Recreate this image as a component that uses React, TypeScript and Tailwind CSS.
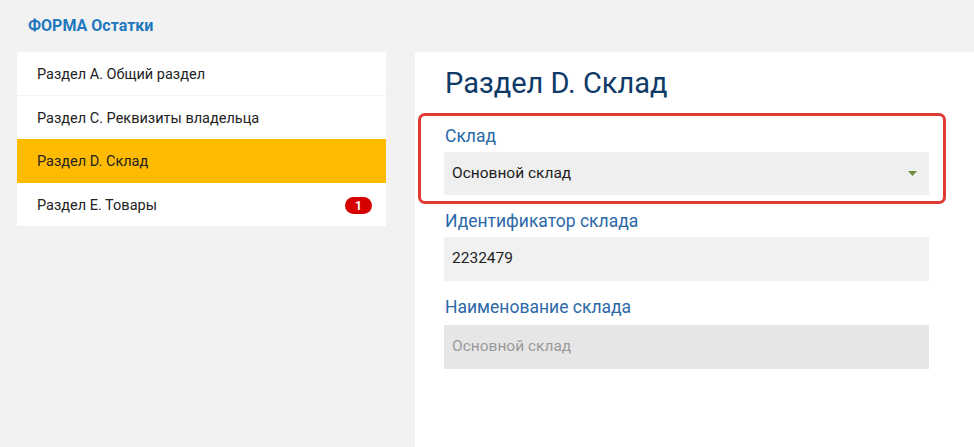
const sections = [
  { name: "Раздел А. Общий раздел" },
  { name: "Раздел С. Реквизиты владельца" },
  { name: "Раздел D. Склад", active: true },
  { name: "Раздел Е. Товары", badge: 1 },
]

export default function App() {
  return (
    <div className="w-[974px] h-[447px] bg-[#f2f2f2] flex flex-col overflow-hidden font-['Roboto',sans-serif]">
      <div className="h-[52px] flex items-center pl-[28px]">
        <span className="text-[16px] font-bold text-[#1f78bd]">ФОРМА Остатки</span>
      </div>

      <div className="flex flex-1 min-h-0">
        <aside className="ml-[17px] w-[369px] self-start bg-white">
          {sections.map((s, i) => (
            <div
              key={s.name}
              className={`h-[43.5px] flex items-center justify-between pl-[20px] pr-[14px] pt-[3px] ${
                s.active ? "bg-[#ffbb00]" : ""
              } ${i === 0 ? "border-b border-[#f3f3f3]" : ""}`}
            >
              <span className="text-[14.5px] text-[#222]">{s.name}</span>
              {s.badge ? (
                <span className="h-[17px] min-w-[27px] px-[8px] rounded-full bg-[#d60000] text-white text-[12px] font-bold flex items-center justify-center leading-none">
                  {s.badge}
                </span>
              ) : null}
            </div>
          ))}
        </aside>

        <main className="ml-[29px] flex-1 bg-white pt-[13px] pl-[3px] pr-[28px]">
          <h1 className="pl-[27px] text-[29px] leading-[36px] text-[#0d3a66]">Раздел D. Склад</h1>

          <div className="mt-[12px] border-[3px] border-[#e03a33] rounded-[7px] pl-[23px] pr-[14px] pt-[10px] pb-[6px]">
            <label className="block text-[17.5px] leading-[20px] text-[#2b68a8] pl-[1px]">Склад</label>
            <div className="mt-[6px] h-[43px] bg-[#efefef] flex items-center justify-between pl-[8px] pr-[12px]">
              <span className="text-[15.5px] text-[#1d1d1d]">Основной склад</span>
              <svg width="9" height="5" viewBox="0 0 9 5">
                <path d="M0 0h9L4.5 5z" fill="#6f8c3c" />
              </svg>
            </div>
          </div>

          <div className="pl-[26px] pr-[17px]">
            <label className="block mt-[7px] text-[17.5px] leading-[20px] text-[#2b68a8] pl-[1px]">Идентификатор склада</label>
            <div className="mt-[6px] h-[44px] bg-[#f1f1f1] flex items-center pl-[8px]">
              <span className="text-[15.5px] text-[#1d1d1d]">2232479</span>
            </div>

            <label className="block mt-[16px] text-[17.5px] leading-[20px] text-[#2b68a8] pl-[1px]">Наименование склада</label>
            <div className="mt-[8px] h-[44px] bg-[#e6e6e6] flex items-center pl-[8px]">
              <span className="text-[15.5px] text-[#9a9a9a]">Основной склад</span>
            </div>
          </div>
        </main>
      </div>
    </div>
  )
}
